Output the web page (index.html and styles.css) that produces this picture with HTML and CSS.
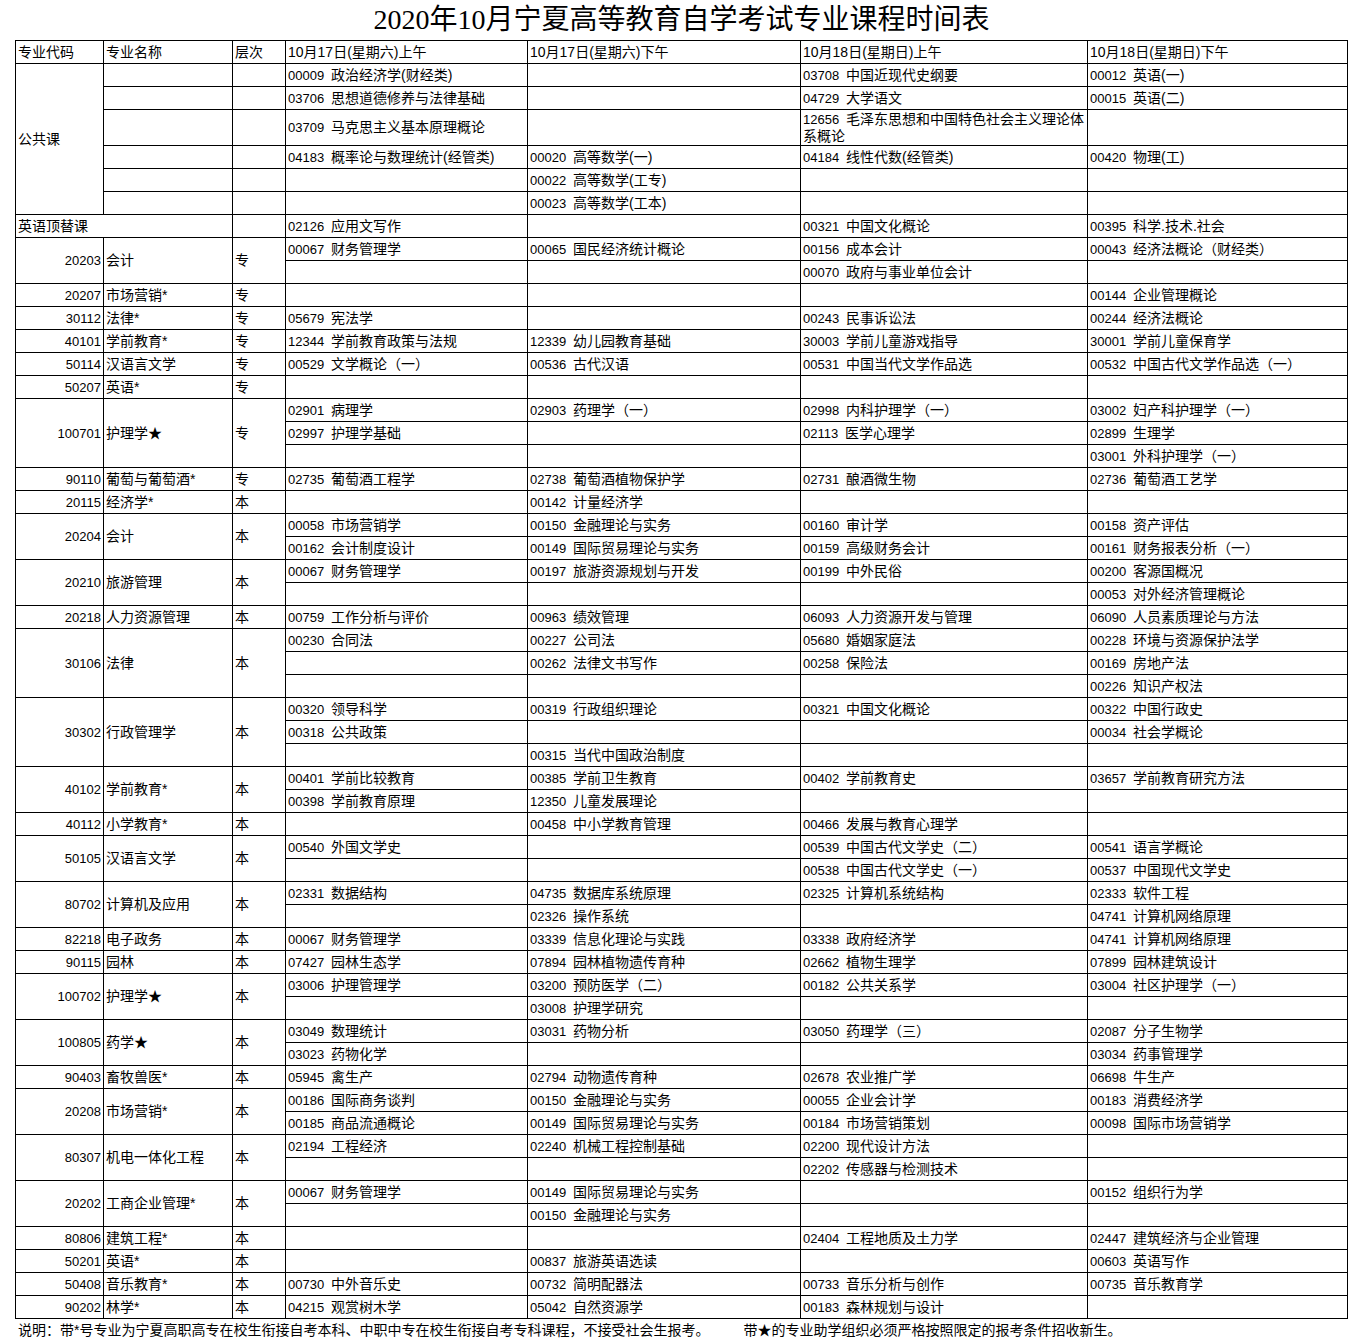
FILE: index.html
```html
<!DOCTYPE html>
<html lang="zh-CN">
<head>
<meta charset="utf-8">
<title>2020年10月宁夏高等教育自学考试专业课程时间表</title>
<link rel="stylesheet" href="styles.css">
</head>
<body>
<div class="page">
<h1 class="title">2020年10月宁夏高等教育自学考试专业课程时间表</h1>
<table class="sheet">
<colgroup>
<col class="c-code"><col class="c-name"><col class="c-level"><col class="c-d1"><col class="c-d2"><col class="c-d3"><col class="c-d4">
</colgroup>
<tbody>
<tr><td>专业代码</td><td>专业名称</td><td>层次</td><td>10月17日(星期六)上午</td><td>10月17日(星期六)下午</td><td>10月18日(星期日)上午</td><td>10月18日(星期日)下午</td></tr>

<tr><td rowspan="6">公共课</td><td></td><td></td><td><span class="k">00009</span> 政治经济学(财经类)</td><td></td><td><span class="k">03708</span> 中国近现代史纲要</td><td><span class="k">00012</span> 英语(一)</td></tr>
<tr><td></td><td></td><td><span class="k">03706</span> 思想道德修养与法律基础</td><td></td><td><span class="k">04729</span> 大学语文</td><td><span class="k">00015</span> 英语(二)</td></tr>
<tr class="tall"><td></td><td></td><td><span class="k">03709</span> 马克思主义基本原理概论</td><td></td><td class="wrap"><span class="k">12656</span> 毛泽东思想和中国特色社会主义理论体<br>系概论</td><td></td></tr>
<tr><td></td><td></td><td><span class="k">04183</span> 概率论与数理统计(经管类)</td><td><span class="k">00020</span> 高等数学(一)</td><td><span class="k">04184</span> 线性代数(经管类)</td><td><span class="k">00420</span> 物理(工)</td></tr>
<tr><td></td><td></td><td></td><td><span class="k">00022</span> 高等数学(工专)</td><td></td><td></td></tr>
<tr><td></td><td></td><td></td><td><span class="k">00023</span> 高等数学(工本)</td><td></td><td></td></tr>

<tr><td colspan="2">英语顶替课</td><td></td><td><span class="k">02126</span> 应用文写作</td><td></td><td><span class="k">00321</span> 中国文化概论</td><td><span class="k">00395</span> 科学.技术.社会</td></tr>

<tr><td class="num" rowspan="2">20203</td><td rowspan="2">会计</td><td rowspan="2">专</td><td><span class="k">00067</span> 财务管理学</td><td><span class="k">00065</span> 国民经济统计概论</td><td><span class="k">00156</span> 成本会计</td><td><span class="k">00043</span> 经济法概论（财经类）</td></tr>
<tr><td></td><td></td><td><span class="k">00070</span> 政府与事业单位会计</td><td></td></tr>

<tr><td class="num">20207</td><td>市场营销*</td><td>专</td><td></td><td></td><td></td><td><span class="k">00144</span> 企业管理概论</td></tr>
<tr><td class="num">30112</td><td>法律*</td><td>专</td><td><span class="k">05679</span> 宪法学</td><td></td><td><span class="k">00243</span> 民事诉讼法</td><td><span class="k">00244</span> 经济法概论</td></tr>
<tr><td class="num">40101</td><td>学前教育*</td><td>专</td><td><span class="k">12344</span> 学前教育政策与法规</td><td><span class="k">12339</span> 幼儿园教育基础</td><td><span class="k">30003</span> 学前儿童游戏指导</td><td><span class="k">30001</span> 学前儿童保育学</td></tr>
<tr><td class="num">50114</td><td>汉语言文学</td><td>专</td><td><span class="k">00529</span> 文学概论（一）</td><td><span class="k">00536</span> 古代汉语</td><td><span class="k">00531</span> 中国当代文学作品选</td><td><span class="k">00532</span> 中国古代文学作品选（一）</td></tr>
<tr><td class="num">50207</td><td>英语*</td><td>专</td><td></td><td></td><td></td><td></td></tr>

<tr><td class="num" rowspan="3">100701</td><td rowspan="3">护理学★</td><td rowspan="3">专</td><td><span class="k">02901</span> 病理学</td><td><span class="k">02903</span> 药理学（一）</td><td><span class="k">02998</span> 内科护理学（一）</td><td><span class="k">03002</span> 妇产科护理学（一）</td></tr>
<tr><td><span class="k">02997</span> 护理学基础</td><td></td><td><span class="k">02113</span> 医学心理学</td><td><span class="k">02899</span> 生理学</td></tr>
<tr><td></td><td></td><td></td><td><span class="k">03001</span> 外科护理学（一）</td></tr>

<tr><td class="num">90110</td><td>葡萄与葡萄酒*</td><td>专</td><td><span class="k">02735</span> 葡萄酒工程学</td><td><span class="k">02738</span> 葡萄酒植物保护学</td><td><span class="k">02731</span> 酿酒微生物</td><td><span class="k">02736</span> 葡萄酒工艺学</td></tr>
<tr><td class="num">20115</td><td>经济学*</td><td>本</td><td></td><td><span class="k">00142</span> 计量经济学</td><td></td><td></td></tr>

<tr><td class="num" rowspan="2">20204</td><td rowspan="2">会计</td><td rowspan="2">本</td><td><span class="k">00058</span> 市场营销学</td><td><span class="k">00150</span> 金融理论与实务</td><td><span class="k">00160</span> 审计学</td><td><span class="k">00158</span> 资产评估</td></tr>
<tr><td><span class="k">00162</span> 会计制度设计</td><td><span class="k">00149</span> 国际贸易理论与实务</td><td><span class="k">00159</span> 高级财务会计</td><td><span class="k">00161</span> 财务报表分析（一）</td></tr>

<tr><td class="num" rowspan="2">20210</td><td rowspan="2">旅游管理</td><td rowspan="2">本</td><td><span class="k">00067</span> 财务管理学</td><td><span class="k">00197</span> 旅游资源规划与开发</td><td><span class="k">00199</span> 中外民俗</td><td><span class="k">00200</span> 客源国概况</td></tr>
<tr><td></td><td></td><td></td><td><span class="k">00053</span> 对外经济管理概论</td></tr>

<tr><td class="num">20218</td><td>人力资源管理</td><td>本</td><td><span class="k">00759</span> 工作分析与评价</td><td><span class="k">00963</span> 绩效管理</td><td><span class="k">06093</span> 人力资源开发与管理</td><td><span class="k">06090</span> 人员素质理论与方法</td></tr>

<tr><td class="num" rowspan="3">30106</td><td rowspan="3">法律</td><td rowspan="3">本</td><td><span class="k">00230</span> 合同法</td><td><span class="k">00227</span> 公司法</td><td><span class="k">05680</span> 婚姻家庭法</td><td><span class="k">00228</span> 环境与资源保护法学</td></tr>
<tr><td></td><td><span class="k">00262</span> 法律文书写作</td><td><span class="k">00258</span> 保险法</td><td><span class="k">00169</span> 房地产法</td></tr>
<tr><td></td><td></td><td></td><td><span class="k">00226</span> 知识产权法</td></tr>

<tr><td class="num" rowspan="3">30302</td><td rowspan="3">行政管理学</td><td rowspan="3">本</td><td><span class="k">00320</span> 领导科学</td><td><span class="k">00319</span> 行政组织理论</td><td><span class="k">00321</span> 中国文化概论</td><td><span class="k">00322</span> 中国行政史</td></tr>
<tr><td><span class="k">00318</span> 公共政策</td><td></td><td></td><td><span class="k">00034</span> 社会学概论</td></tr>
<tr><td></td><td><span class="k">00315</span> 当代中国政治制度</td><td></td><td></td></tr>

<tr><td class="num" rowspan="2">40102</td><td rowspan="2">学前教育*</td><td rowspan="2">本</td><td><span class="k">00401</span> 学前比较教育</td><td><span class="k">00385</span> 学前卫生教育</td><td><span class="k">00402</span> 学前教育史</td><td><span class="k">03657</span> 学前教育研究方法</td></tr>
<tr><td><span class="k">00398</span> 学前教育原理</td><td><span class="k">12350</span> 儿童发展理论</td><td></td><td></td></tr>

<tr><td class="num">40112</td><td>小学教育*</td><td>本</td><td></td><td><span class="k">00458</span> 中小学教育管理</td><td><span class="k">00466</span> 发展与教育心理学</td><td></td></tr>

<tr><td class="num" rowspan="2">50105</td><td rowspan="2">汉语言文学</td><td rowspan="2">本</td><td><span class="k">00540</span> 外国文学史</td><td></td><td><span class="k">00539</span> 中国古代文学史（二）</td><td><span class="k">00541</span> 语言学概论</td></tr>
<tr><td></td><td></td><td><span class="k">00538</span> 中国古代文学史（一）</td><td><span class="k">00537</span> 中国现代文学史</td></tr>

<tr><td class="num" rowspan="2">80702</td><td rowspan="2">计算机及应用</td><td rowspan="2">本</td><td><span class="k">02331</span> 数据结构</td><td><span class="k">04735</span> 数据库系统原理</td><td><span class="k">02325</span> 计算机系统结构</td><td><span class="k">02333</span> 软件工程</td></tr>
<tr><td></td><td><span class="k">02326</span> 操作系统</td><td></td><td><span class="k">04741</span> 计算机网络原理</td></tr>

<tr><td class="num">82218</td><td>电子政务</td><td>本</td><td><span class="k">00067</span> 财务管理学</td><td><span class="k">03339</span> 信息化理论与实践</td><td><span class="k">03338</span> 政府经济学</td><td><span class="k">04741</span> 计算机网络原理</td></tr>
<tr><td class="num">90115</td><td>园林</td><td>本</td><td><span class="k">07427</span> 园林生态学</td><td><span class="k">07894</span> 园林植物遗传育种</td><td><span class="k">02662</span> 植物生理学</td><td><span class="k">07899</span> 园林建筑设计</td></tr>

<tr><td class="num" rowspan="2">100702</td><td rowspan="2">护理学★</td><td rowspan="2">本</td><td><span class="k">03006</span> 护理管理学</td><td><span class="k">03200</span> 预防医学（二）</td><td><span class="k">00182</span> 公共关系学</td><td><span class="k">03004</span> 社区护理学（一）</td></tr>
<tr><td></td><td><span class="k">03008</span> 护理学研究</td><td></td><td></td></tr>

<tr><td class="num" rowspan="2">100805</td><td rowspan="2">药学★</td><td rowspan="2">本</td><td><span class="k">03049</span> 数理统计</td><td><span class="k">03031</span> 药物分析</td><td><span class="k">03050</span> 药理学（三）</td><td><span class="k">02087</span> 分子生物学</td></tr>
<tr><td><span class="k">03023</span> 药物化学</td><td></td><td></td><td><span class="k">03034</span> 药事管理学</td></tr>

<tr><td class="num">90403</td><td>畜牧兽医*</td><td>本</td><td><span class="k">05945</span> 禽生产</td><td><span class="k">02794</span> 动物遗传育种</td><td><span class="k">02678</span> 农业推广学</td><td><span class="k">06698</span> 牛生产</td></tr>

<tr><td class="num" rowspan="2">20208</td><td rowspan="2">市场营销*</td><td rowspan="2">本</td><td><span class="k">00186</span> 国际商务谈判</td><td><span class="k">00150</span> 金融理论与实务</td><td><span class="k">00055</span> 企业会计学</td><td><span class="k">00183</span> 消费经济学</td></tr>
<tr><td><span class="k">00185</span> 商品流通概论</td><td><span class="k">00149</span> 国际贸易理论与实务</td><td><span class="k">00184</span> 市场营销策划</td><td><span class="k">00098</span> 国际市场营销学</td></tr>

<tr><td class="num" rowspan="2">80307</td><td rowspan="2">机电一体化工程</td><td rowspan="2">本</td><td><span class="k">02194</span> 工程经济</td><td><span class="k">02240</span> 机械工程控制基础</td><td><span class="k">02200</span> 现代设计方法</td><td></td></tr>
<tr><td></td><td></td><td><span class="k">02202</span> 传感器与检测技术</td><td></td></tr>

<tr><td class="num" rowspan="2">20202</td><td rowspan="2">工商企业管理*</td><td rowspan="2">本</td><td><span class="k">00067</span> 财务管理学</td><td><span class="k">00149</span> 国际贸易理论与实务</td><td></td><td><span class="k">00152</span> 组织行为学</td></tr>
<tr><td></td><td><span class="k">00150</span> 金融理论与实务</td><td></td><td></td></tr>

<tr><td class="num">80806</td><td>建筑工程*</td><td>本</td><td></td><td></td><td><span class="k">02404</span> 工程地质及土力学</td><td><span class="k">02447</span> 建筑经济与企业管理</td></tr>
<tr><td class="num">50201</td><td>英语*</td><td>本</td><td></td><td><span class="k">00837</span> 旅游英语选读</td><td></td><td><span class="k">00603</span> 英语写作</td></tr>
<tr><td class="num">50408</td><td>音乐教育*</td><td>本</td><td><span class="k">00730</span> 中外音乐史</td><td><span class="k">00732</span> 简明配器法</td><td><span class="k">00733</span> 音乐分析与创作</td><td><span class="k">00735</span> 音乐教育学</td></tr>
<tr><td class="num">90202</td><td>林学*</td><td>本</td><td><span class="k">04215</span> 观赏树木学</td><td><span class="k">05042</span> 自然资源学</td><td><span class="k">00183</span> 森林规划与设计</td><td></td></tr>
</tbody>
</table>
<p class="note">说明：带*号专业为宁夏高职高专在校生衔接自考本科、中职中专在校生衔接自考专科课程，不接受社会生报考。<span class="note-2">带★的专业助学组织必须严格按照限定的报考条件招收新生。</span></p>
</div>
</body>
</html>
```

FILE: styles.css
```css
html, body {
  margin: 0;
  padding: 0;
  background: #fff;
}

body {
  padding-left: 15px;
  color: #000;
  font-family: "Liberation Sans", "Noto Sans CJK SC", sans-serif;
  font-size: 14px;
}

.page {
  width: 1333px;
}

.title {
  margin: 0;
  height: 40px;
  font-family: "Liberation Serif", "Noto Sans CJK SC", serif;
  font-size: 28px;
  font-weight: normal;
  line-height: 40px;
  text-align: center;
}

.sheet {
  width: 1332px;
  border-collapse: collapse;
  table-layout: fixed;
}

.c-code { width: 88px; }
.c-name { width: 129px; }
.c-level { width: 53px; }
.c-d1 { width: 242px; }
.c-d2 { width: 273px; }
.c-d3 { width: 287px; }
.c-d4 { width: 260px; }

.sheet td {
  height: 22px;
  padding: 0 2px;
  border: 1px solid #000;
  line-height: 17px;
  white-space: nowrap;
  overflow: hidden;
  vertical-align: middle;
  text-align: left;
}

.sheet .tall td {
  height: 35px;
}

.sheet td.wrap {
  white-space: normal;
}

.sheet td.num {
  text-align: right;
  font-size: 13px;
}

.k {
  font-size: 13px;
  margin-right: 3px;
}

.note {
  margin: 0;
  padding: 2px 0 0 3px;
  line-height: 18px;
  white-space: nowrap;
}

.note-2 {
  margin-left: 34px;
}
```
